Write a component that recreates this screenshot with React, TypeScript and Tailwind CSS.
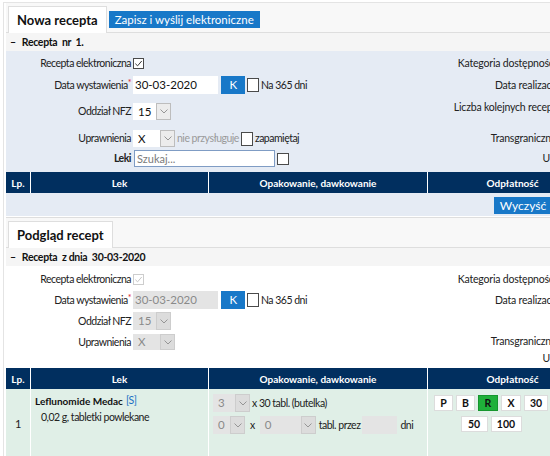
import React from 'react';

type BoxProps = { checked?: boolean; disabled?: boolean; className?: string };

function Box({ checked = false, disabled = false, className = '' }: BoxProps): React.ReactElement {
  return (
    <span
      className={`inline-flex shrink-0 items-center justify-center bg-white border ${
        disabled ? 'border-[#cdcdcd]' : 'border-[#4a4a4a]'
      } ${className}`}
    >
      {checked && (
        <svg viewBox="0 0 10 10" className="w-[9px] h-[9px]">
          <polyline
            points="1.5,5.2 4,7.6 8.6,2.2"
            fill="none"
            stroke={disabled ? '#c4c4c4' : '#333'}
            strokeWidth="1.1"
          />
        </svg>
      )}
    </span>
  );
}

function Chevron(): React.ReactElement {
  return (
    <svg viewBox="0 0 8 5" className="w-[8px] h-[5px]">
      <polyline points="0.5,0.5 4,4 7.5,0.5" fill="none" stroke="#8c8c8c" strokeWidth="0.9" />
    </svg>
  );
}

type SelectProps = { value: string; className: string; disabled?: boolean };

function Select({ value, className, disabled = false }: SelectProps): React.ReactElement {
  return (
    <div className={`flex shrink-0 tracking-normal ${disabled ? 'bg-[#e4e4e4]' : 'bg-white'} ${className}`}>
      <span className={`flex-1 flex items-center pl-[5px] text-[11.5px] ${disabled ? 'text-[#8a8a8a]' : 'text-[#111]'}`}>
        {value}
      </span>
      <span
        className={`w-[15px] flex items-center justify-center border ${
          disabled ? 'border-[#cdcdcd] bg-[#dcdcdc]' : 'border-[#bdbdbd] bg-[#ececec]'
        }`}
      >
        <Chevron />
      </span>
    </div>
  );
}

function Star(): React.ReactElement {
  return <span className="text-[#e0262b] text-[9px] relative -top-[3px]">*</span>;
}

function TabRow({ title, children }: { title: string; children?: React.ReactNode }): React.ReactElement {
  return (
    <div className="flex items-start h-[30px] bg-[#f8f8f8] border-b border-[#dedede]">
      <div className="ml-[2px] mt-[3px] h-[27px] px-[8px] bg-white border border-b-0 border-[#dedede] flex items-center font-bold text-[13px] tracking-normal text-[#111]">
        {title}
      </div>
      {children}
    </div>
  );
}

function SectionBar({ title }: { title: string }): React.ReactElement {
  return (
    <div className="h-[18px] bg-[#f5f5f5] flex items-center pl-[4px] font-bold text-[10.5px] tracking-[-0.3px] text-[#111] whitespace-pre">
      <span>–</span>
      <span className="ml-[6px]">{title}</span>
    </div>
  );
}

function TableHead(): React.ReactElement {
  return (
    <div className="grid grid-cols-[24px_178px_219px_170px] h-[21px] bg-[#012f5f] text-white font-bold text-[10px] tracking-normal">
      <div className="flex items-center justify-center">Lp.</div>
      <div className="flex items-center justify-center border-l border-white">Lek</div>
      <div className="flex items-center justify-center border-l border-white">Opakowanie, dawkowanie</div>
      <div className="flex items-center justify-center border-l border-white">Odpłatność</div>
    </div>
  );
}

function Label({ children, bold = false }: { children: React.ReactNode; bold?: boolean }): React.ReactElement {
  return <div className={`w-[125px] shrink-0 text-right whitespace-nowrap ${bold ? 'font-bold' : ''}`}>{children}</div>;
}

function NewPrescription(): React.ReactElement {
  return (
    <div>
      <TabRow title="Nowa recepta">
        <button className="ml-[2px] mt-[8px] h-[17px] w-[151px] bg-[#1878c8] text-white text-[11.5px] tracking-normal flex items-center justify-center">
          Zapisz i wyślij elektroniczne
        </button>
      </TabRow>
      <SectionBar title="Recepta  nr  1." />
      <div className="bg-[#e5ebf4] pb-[2px]">
        <div className="flex items-start">
          <div className="w-[414px] flex flex-col">
            <div className="flex items-center h-[20px] mt-[2px]">
              <Label>Recepta elektroniczna</Label>
              <Box checked className="ml-[2px] w-[11px] h-[11px]" />
            </div>
            <div className="flex items-center h-[18px] mt-[3px]">
              <Label>
                Data wystawienia<Star />
              </Label>
              <div className="ml-[2px] w-[85px] h-[18px] bg-white flex items-center pl-[2px] text-[11.5px] tracking-normal text-[#111]">
                30-03-2020
              </div>
              <button className="ml-[3px] w-[24px] h-[18px] bg-[#1878c8] text-white text-[11.5px] flex items-center justify-center">
                K
              </button>
              <Box className="ml-[2px] w-[12px] h-[14px]" />
              <span className="ml-[2px]">Na 365 dni</span>
            </div>
            <div className="flex items-center h-[17px] mt-[9px]">
              <Label>Oddział NFZ</Label>
              <Select value="15" className="ml-[2px] w-[38px] h-[17px]" />
            </div>
            <div className="flex items-center h-[17px] mt-[10px]">
              <Label>Uprawnienia</Label>
              <Select value="X" className="ml-[2px] w-[42px] h-[17px]" />
              <span className="ml-[2px] text-[#9a9a9a]">nie przysługuje</span>
              <Box className="ml-[2px] w-[12px] h-[14px]" />
              <span className="ml-[2px]">zapamiętaj</span>
            </div>
            <div className="flex items-center h-[17px] mt-[3px]">
              <Label bold>Leki</Label>
              <div className="ml-[3px] w-[141px] h-[17px] bg-white border border-[#7f9cc4] flex items-center pl-[2px] text-[11px] tracking-normal text-[#7a7a7a]">
                Szukaj...
              </div>
              <Box className="ml-[2px] w-[12px] h-[12px]" />
            </div>
          </div>
          <div className="w-[136px] flex flex-col items-end text-right whitespace-nowrap tracking-[-0.2px]">
            <div className="h-[20px] mt-[2px] flex items-center">Kategoria dostępności</div>
            <div className="h-[18px] mt-[3px] flex items-center">Data realizacji</div>
            <div className="h-[18px] mt-[4px] flex items-center">Liczba kolejnych recept</div>
            <div className="h-[17px] mt-[14px] flex items-center">Transgraniczna</div>
            <div className="h-[17px] mt-[3px] flex items-center">UE</div>
          </div>
        </div>
        <div className="mt-[5px]">
          <TableHead />
        </div>
        <div className="w-[546px] flex justify-end pt-[4px]">
          <button className="w-[58px] h-[17px] bg-[#1878c8] text-white text-[12px] tracking-normal flex items-center justify-center">
            Wyczyść
          </button>
        </div>
      </div>
      <div className="h-[1px] bg-white" />
    </div>
  );
}

const payButtons = [
  { t: 'P', w: 'w-[19px]' },
  { t: 'B', w: 'w-[19px]' },
  { t: 'R', w: 'w-[20px]', on: true },
  { t: 'X', w: 'w-[20px]' },
  { t: '30', w: 'w-[24px]' },
  { t: '50', w: 'w-[27px]' },
  { t: '100', w: 'w-[31px]' },
];

function Preview(): React.ReactElement {
  return (
    <div className="border-t border-[#dedede]">
      <TabRow title="Podgląd recept" />
      <SectionBar title="Recepta  z dnia  30-03-2020" />
      <div className="bg-white">
        <div className="flex items-start">
          <div className="w-[414px] flex flex-col">
            <div className="flex items-center h-[20px] mt-[3px]">
              <Label>Recepta elektroniczna</Label>
              <Box checked disabled className="ml-[2px] w-[11px] h-[11px]" />
            </div>
            <div className="flex items-center h-[18px] mt-[2px]">
              <Label>
                Data wystawienia<Star />
              </Label>
              <div className="ml-[2px] w-[85px] h-[18px] bg-[#e4e4e4] flex items-center pl-[2px] text-[11.5px] tracking-normal text-[#8a8a8a]">
                30-03-2020
              </div>
              <button className="ml-[3px] w-[24px] h-[18px] bg-[#1878c8] text-white text-[11.5px] flex items-center justify-center">
                K
              </button>
              <Box className="ml-[2px] w-[12px] h-[14px]" />
              <span className="ml-[2px]">Na 365 dni</span>
            </div>
            <div className="flex items-center h-[18px] mt-[3px]">
              <Label>Oddział NFZ</Label>
              <Select disabled value="15" className="ml-[2px] w-[38px] h-[18px]" />
            </div>
            <div className="flex items-center h-[16px] mt-[4px]">
              <Label>Uprawnienia</Label>
              <Select disabled value="X" className="ml-[2px] w-[42px] h-[16px]" />
            </div>
          </div>
          <div className="w-[136px] flex flex-col items-end text-right whitespace-nowrap tracking-[-0.2px]">
            <div className="h-[20px] mt-[3px] flex items-center">Kategoria dostępności</div>
            <div className="h-[18px] mt-[2px] flex items-center">Data realizacji</div>
            <div className="h-[16px] mt-[24px] flex items-center">Transgraniczna</div>
            <div className="h-[16px] mt-[1px] flex items-center">UE</div>
          </div>
        </div>
        <div className="mt-[2px]">
          <TableHead />
          <div className="grid grid-cols-[24px_178px_219px_170px] h-[68px] bg-[#e0efe7]">
            <div className="flex items-center justify-center text-[11px]">1</div>
            <div className="border-l border-white pl-[4px] pt-[6px]">
              <div className="h-[11px] flex items-center">
                <span className="font-bold text-[10px] tracking-normal text-[#111]">Leflunomide Medac</span>
                <span className="ml-[3px] text-[#1a6fc4] text-[10.5px]">[S]</span>
              </div>
              <div className="h-[11px] mt-[6px] pl-[6px] flex items-center">0,02 g, tabletki powlekane</div>
            </div>
            <div className="border-l border-white pl-[4px] pt-[5px]">
              <div className="flex items-center h-[18px]">
                <Select disabled value="3" className="w-[37px] h-[18px]" />
                <span className="ml-[2px]">x 30 tabl. (butelka)</span>
              </div>
              <div className="flex items-center h-[18px] mt-[4px]">
                <Select disabled value="0" className="w-[32px] h-[18px]" />
                <span className="ml-[5px]">x</span>
                <Select disabled value="0" className="ml-[5px] w-[56px] h-[18px]" />
                <span className="ml-[3px]">tabl. przez</span>
                <div className="ml-[2px] w-[35px] h-[18px] bg-[#e4e4e4]" />
                <span className="ml-[3px]">dni</span>
              </div>
            </div>
            <div className="border-l border-white pl-[6px] pt-[6px]">
              <div className="w-[114px] flex flex-wrap justify-center gap-x-[3px] gap-y-[5px]">
                {payButtons.map((b) => (
                  <span
                    key={b.t}
                    className={`${b.w} h-[16px] flex items-center justify-center border font-bold text-[10.5px] tracking-normal text-[#111] ${
                      b.on ? 'bg-[#1fb03a] border-[#16962e]' : 'bg-white border-[#dcdcdc]'
                    }`}
                  >
                    {b.t}
                  </span>
                ))}
              </div>
            </div>
          </div>
        </div>
      </div>
    </div>
  );
}

export default function App(): React.ReactElement {
  return (
    <div className="w-[550px] h-[456px] overflow-hidden bg-white pt-[2px] font-['Lato',sans-serif] text-[10.5px] tracking-[-0.5px] leading-none text-[#222]">
      <div className="w-[720px] ml-[3px] border-l border-t border-[#e4e4e4] pl-[2px]">
        <NewPrescription />
        <Preview />
      </div>
    </div>
  );
}
